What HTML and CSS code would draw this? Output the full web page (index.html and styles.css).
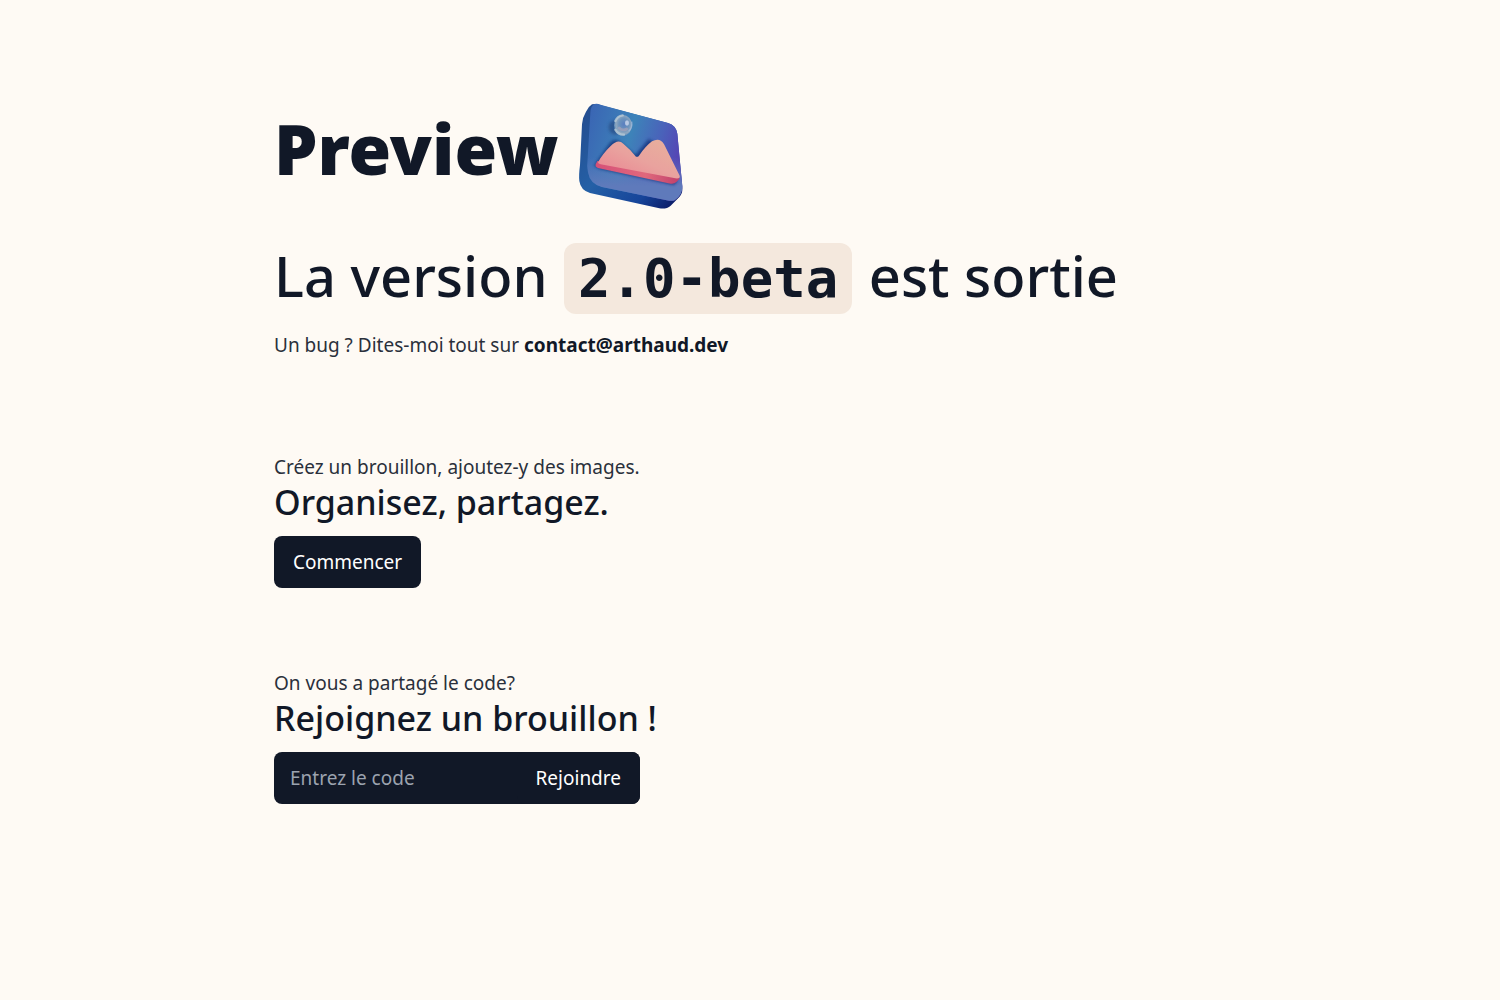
FILE: index.html
```html
<!DOCTYPE html>
<html lang="fr">
<head>
  <meta charset="utf-8">
  <meta name="viewport" content="width=device-width, initial-scale=1">
  <title>Preview</title>
  <link rel="stylesheet" href="styles.css">
</head>
<body>
  <main class="page">
    <header class="hero">
      <div class="brand">
        <h1 class="brand-name">Preview</h1>
        <svg class="brand-logo" viewBox="24 24 324 324" aria-hidden="true">
          <defs>
            <linearGradient id="side" x1="0" y1="0" x2="1" y2="1">
              <stop offset="0" stop-color="#244a8c"/>
              <stop offset=".45" stop-color="#2460a6"/>
              <stop offset=".75" stop-color="#17459a"/>
              <stop offset="1" stop-color="#080f58"/>
            </linearGradient>
            <linearGradient id="face" x1="0" y1=".2" x2="1" y2=".5">
              <stop offset="0" stop-color="#3a66b4"/>
              <stop offset=".45" stop-color="#3d83b9"/>
              <stop offset=".75" stop-color="#4a62ba"/>
              <stop offset="1" stop-color="#5742b4"/>
            </linearGradient>
            <linearGradient id="floor" x1="0" y1="0" x2="0" y2="1">
              <stop offset=".55" stop-color="#5f7abb" stop-opacity="0"/>
              <stop offset=".85" stop-color="#5f7abb"/>
            </linearGradient>
            <linearGradient id="peak" x1="0" y1="1" x2="1" y2="0">
              <stop offset="0" stop-color="#ea8090"/>
              <stop offset=".5" stop-color="#e9a29e"/>
              <stop offset="1" stop-color="#e8b29c"/>
            </linearGradient>
            <linearGradient id="edge" x1="0" y1="0" x2="1" y2="0">
              <stop offset="0" stop-color="#d65078"/>
              <stop offset=".6" stop-color="#e0687c"/>
              <stop offset="1" stop-color="#c0406c"/>
            </linearGradient>
            <radialGradient id="ball" cx=".55" cy=".45" r=".55">
              <stop offset="0" stop-color="#5a7fc0"/>
              <stop offset=".5" stop-color="#6c93bc"/>
              <stop offset=".8" stop-color="#90a8c0"/>
              <stop offset="1" stop-color="#5f8cba"/>
            </radialGradient>
            <filter id="soft" x="-20%" y="-20%" width="140%" height="140%">
              <feGaussianBlur stdDeviation="5"/>
            </filter>
          </defs>
          <path fill="url(#side)" d="M66 28Q76 25 90 30L294 84Q318 91 322 116L337 280Q338 296 328 306L302 332Q290 343 268 340L60 294Q32 286 28 258Q26 240 30 210L36 88Q37 68 48 50Q56 34 66 28Z"/>
          <path fill="url(#face)" d="M74 27Q82 25 94 30L294 84Q318 91 322 116L337 274Q338 300 314 316Q306 319 290 316L96 276Q60 267 54 232Q50 214 53 190L61 54Q62 32 74 27Z"/>
          <path fill="url(#floor)" d="M74 27Q82 25 94 30L294 84Q318 91 322 116L337 274Q338 300 314 316Q306 319 290 316L96 276Q60 267 54 232Q50 214 53 190L61 54Q62 32 74 27Z"/>
          <path fill="#102a72" opacity=".7" filter="url(#soft)" d="M72 212L118 146Q128 132 144 136L196 180L236 132L250 140L322 258L312 270L90 222Z"/>
          <ellipse cx="136" cy="97" rx="20" ry="22" fill="#20447c" opacity=".6" filter="url(#soft)"/>
          <path fill="url(#edge)" d="M82 198L77 208Q75 216 84 219L302 266Q312 268 319 261L328 252L326 236L94 200Z"/>
          <path fill="url(#peak)" d="M84 202Q98 176 122 153Q144 130 160 146Q182 164 198 185Q203 187 207 182Q226 154 246 139Q270 126 283 149L329 242Q332 252 316 250L92 208Q84 207 84 202Z"/>
          <ellipse cx="159" cy="91" rx="27" ry="31" fill="url(#ball)"/>
          <path d="M136 78Q142 63 158 61M136 104Q145 120 162 119" fill="none" stroke="#b9cbd6" stroke-width="7" stroke-linecap="round" opacity=".8"/>
          <path d="M148 99Q158 109 170 102" fill="none" stroke="#a8a3b8" stroke-width="8" stroke-linecap="round" opacity=".7"/>
          <ellipse cx="171" cy="84" rx="6" ry="8" fill="#b9c9e4"/>
          <path d="M185 80Q188 98 176 109" fill="none" stroke="#9db8d8" stroke-width="4" opacity=".8"/>
        </svg>
      </div>
      <h2 class="release">La version <code class="version">2.0-beta</code> est sortie</h2>
      <p class="text">Un bug ? Dites-moi tout sur <a class="mail" href="mailto:contact@arthaud.dev">contact@arthaud.dev</a></p>
    </header>

    <section class="block">
      <p class="text">Créez un brouillon, ajoutez-y des images.</p>
      <h3 class="block-title">Organisez, partagez.</h3>
      <button class="button" type="button">Commencer</button>
    </section>

    <section class="block">
      <p class="text">On vous a partagé le code?</p>
      <h3 class="block-title">Rejoignez un brouillon !</h3>
      <form class="join">
        <input class="join-input" type="text" placeholder="Entrez le code" aria-label="Entrez le code">
        <button class="button" type="submit">Rejoindre</button>
      </form>
    </section>
  </main>
</body>
</html>
```
FILE: styles.css
```css
* {
  box-sizing: border-box;
}

body {
  margin: 0;
  background: #fefaf4;
  color: #111827;
  font-family: "Segoe UI", "Noto Sans", "Open Sans", sans-serif;
}

h1,
h2,
h3,
p {
  margin: 0;
}

.page {
  display: flex;
  flex-direction: column;
  gap: 80px;
  max-width: 1024px;
  margin: 0 auto;
  padding: 103px 36px 96px;
}

.hero {
  padding-bottom: 14px;
}

.brand {
  display: flex;
  align-items: flex-start;
  gap: 19px;
}

.brand-name {
  padding-top: 9px;
  font-size: 69px;
  font-weight: 900;
  line-height: 72px;
}

.brand-logo {
  width: 108px;
  height: 108px;
}

.release {
  margin-top: 28px;
  font-size: 56px;
  font-weight: 500;
  line-height: 72px;
}

.version {
  margin: 0 2px;
  padding: 4px 14px;
  border-radius: 12px;
  background: #f4e8dd;
  font-family: "DejaVu Sans Mono", monospace;
  font-size: 54px;
  font-weight: 700;
}

.text {
  color: #2a303b;
  font-size: 19px;
  font-weight: 400;
  line-height: 28px;
}

.release + .text {
  margin-top: 16px;
}

.mail {
  color: #111827;
  font-weight: 700;
  text-decoration: none;
}

.block-title {
  font-size: 34px;
  font-weight: 500;
  line-height: 43px;
}

.button {
  height: 52px;
  padding: 0 19px;
  border: 0;
  border-radius: 8px;
  background: #111827;
  color: #fff;
  font: inherit;
  font-size: 19px;
  cursor: pointer;
}

.block .button,
.join {
  margin-top: 12px;
}

.block + .block {
  margin-top: 1px;
}

.join {
  display: flex;
  width: 366px;
  max-width: 100%;
  border-radius: 8px;
  background: #111827;
}

.join .button {
  margin-top: 0;
}

.join-input {
  flex: 1;
  min-width: 0;
  padding: 0 16px;
  border: 0;
  border-radius: 8px;
  background: transparent;
  color: #fff;
  font: inherit;
  font-size: 19px;
}

.join-input::placeholder {
  color: #9ca3af;
  opacity: 1;
}
```
